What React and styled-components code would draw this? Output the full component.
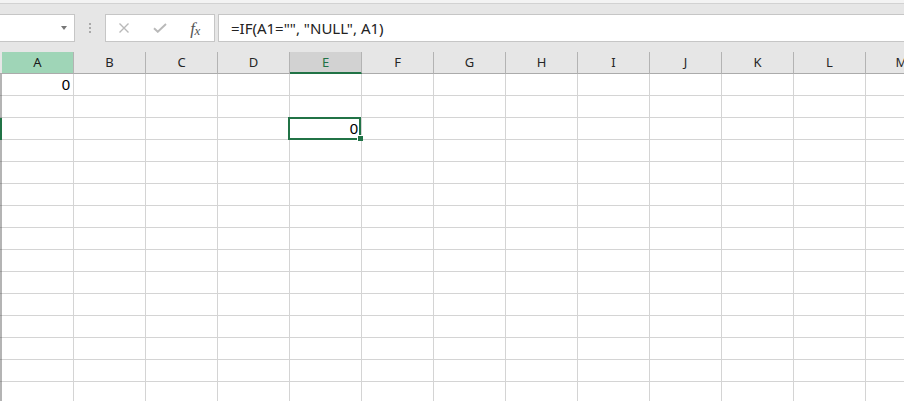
import React from 'react';
import styled, { createGlobalStyle, css } from 'styled-components';

const GlobalStyle = createGlobalStyle`
  html, body { margin: 0; padding: 0; background: #fff; overflow: hidden; }
  #root { width: 904px; height: 401px; }
`;

const Window = styled.div`
  width: 904px;
  height: 401px;
  overflow: hidden;
  display: flex;
  flex-direction: column;
  background: #fff;
`;

const TopStrip = styled.div`
  height: 3px;
  flex-shrink: 0;
  background: #f3f3f3;
  border-bottom: 1px solid #d2d2d2;
`;

const FormulaBar = styled.div`
  display: flex;
  align-items: stretch;
  height: 28px;
  padding: 10px 0;
  flex-shrink: 0;
  background: #e6e6e6;
`;

const NameBox = styled.div`
  width: 75px;
  box-sizing: border-box;
  background: #fff;
  border: 1px solid #c6c6c6;
  border-left: none;
  display: flex;
  align-items: center;
  justify-content: flex-end;
  padding-right: 7px;
`;

const DropArrow = styled.span`
  width: 0;
  height: 0;
  border-left: 3.5px solid transparent;
  border-right: 3.5px solid transparent;
  border-top: 4px solid #777;
  margin-top: -1px;
`;

const Grip = styled.div`
  width: 30px;
  display: flex;
  flex-direction: column;
  align-items: center;
  justify-content: center;
  gap: 2px;
  padding-bottom: 1px;
`;

const GripDot = styled.span`
  width: 2px;
  height: 2px;
  background: #a9a9a9;
`;

const ButtonBox = styled.div`
  width: 110px;
  box-sizing: border-box;
  background: #fff;
  border: 1px solid #c6c6c6;
  display: grid;
  grid-template-columns: repeat(3, 36px);
  align-items: center;
  justify-items: center;
`;

const FxLabel = styled.span`
  font-family: "Liberation Serif", serif;
  font-style: italic;
  font-size: 17px;
  color: #555;
  letter-spacing: -0.5px;
  margin-top: 1px;
  margin-left: -2px;
  & > small {
    font-size: 13px;
    vertical-align: -1px;
  }
`;

const FormulaInput = styled.div`
  flex: 1;
  margin-left: 3px;
  margin-right: -2px;
  box-sizing: border-box;
  background: #fff;
  border: 1px solid #c6c6c6;
  padding-left: 12px;
  display: flex;
  align-items: center;
  font-family: "Noto Sans", "Open Sans", sans-serif;
  font-size: 15px;
  color: #222;
  white-space: nowrap;
`;

const Grid = styled.div`
  display: flex;
  flex-direction: column;
  flex: 1;
  overflow: hidden;
`;

const Row = styled.div`
  display: flex;
  flex-shrink: 0;
  height: 22px;
`;

const HeaderRow = styled(Row)`
  background: #e6e6e6;
`;

const Stub = styled.div`
  width: 2px;
  flex-shrink: 0;
  box-sizing: border-box;
  background: ${p => (p.$header ? '#e6e6e6' : p.$active ? '#217346' : '#b4b4b4')};
  border-bottom: 1px solid ${p => (p.$header ? '#ababab' : p.$active ? '#217346' : '#9a9a9a')};
`;

const ColHeader = styled.div`
  width: 72px;
  flex-shrink: 0;
  box-sizing: border-box;
  border-right: 1px solid #b3b3b3;
  border-bottom: 1px solid #ababab;
  font-family: "Noto Sans", "Open Sans", sans-serif;
  font-size: 13px;
  line-height: 21px;
  text-align: center;
  color: #262626;
  ${p =>
    p.$state === 'highlight' &&
    css`
      background: #9fd5b7;
      color: #1a1a1a;
    `}
  ${p =>
    p.$state === 'selected' &&
    css`
      background: #d2d2d2;
      color: #217346;
      border-bottom: 2px solid #217346;
      line-height: 20px;
    `}
`;

const Cell = styled.div`
  width: 72px;
  flex-shrink: 0;
  box-sizing: border-box;
  border-right: 1px solid #d4d4d4;
  border-bottom: 1px solid #d4d4d4;
  padding-right: 3px;
  text-align: right;
  font-family: "Liberation Sans", Arial, sans-serif;
  font-size: 15px;
  line-height: 21px;
  color: #000;
  position: relative;
  ${p =>
    p.$selected &&
    css`
      z-index: 2;
      &::after {
        content: '';
        position: absolute;
        top: -1px;
        left: -2px;
        right: 0;
        bottom: -1px;
        border: 2px solid #217346;
        pointer-events: none;
      }
    `}
`;

const FillHandle = styled.span`
  position: absolute;
  right: -2px;
  bottom: -2px;
  width: 5px;
  height: 5px;
  background: #217346;
  box-shadow: -1px -1px 0 0 #fff;
  z-index: 3;
`;

const COLS = ['A', 'B', 'C', 'D', 'E', 'F', 'G', 'H', 'I', 'J', 'K', 'L', 'M'];
const ROWS = 15;
const values = { 'A1': '0', 'E3': '0' };

function CancelIcon() {
  return (
    <svg width="12" height="12" viewBox="0 0 12 12">
      <path d="M1.5 1.5 L10.5 10.5 M10.5 1.5 L1.5 10.5" stroke="#b9b9b9" strokeWidth="1.4" fill="none" />
    </svg>
  );
}

function CheckIcon() {
  return (
    <svg width="14" height="10" viewBox="0 0 14 10">
      <path d="M1 5.2 L4.8 8.8 L13 1" stroke="#b9b9b9" strokeWidth="1.9" fill="none" />
    </svg>
  );
}

export default function App() {
  return (
    <>
      <GlobalStyle />
      <Window>
        <TopStrip />
        <FormulaBar>
          <NameBox>
            <DropArrow />
          </NameBox>
          <Grip>
            <GripDot />
            <GripDot />
            <GripDot />
          </Grip>
          <ButtonBox>
            <CancelIcon />
            <CheckIcon />
            <FxLabel>
              f<small>x</small>
            </FxLabel>
          </ButtonBox>
          <FormulaInput>=IF(A1="", "NULL", A1)</FormulaInput>
        </FormulaBar>
        <Grid>
          <HeaderRow>
            <Stub $header />
            {COLS.map(c => (
              <ColHeader key={c} $state={c === 'A' ? 'highlight' : c === 'E' ? 'selected' : undefined}>
                {c}
              </ColHeader>
            ))}
          </HeaderRow>
          {Array.from({ length: ROWS }, (_, i) => {
            const r = i + 1;
            return (
              <Row key={r}>
                <Stub $active={r === 3} />
                {COLS.map(c => {
                  const id = c + r;
                  const sel = id === 'E3';
                  return (
                    <Cell key={id} $selected={sel}>
                      {values[id] || ''}
                      {sel && <FillHandle />}
                    </Cell>
                  );
                })}
              </Row>
            );
          })}
        </Grid>
      </Window>
    </>
  );
}
